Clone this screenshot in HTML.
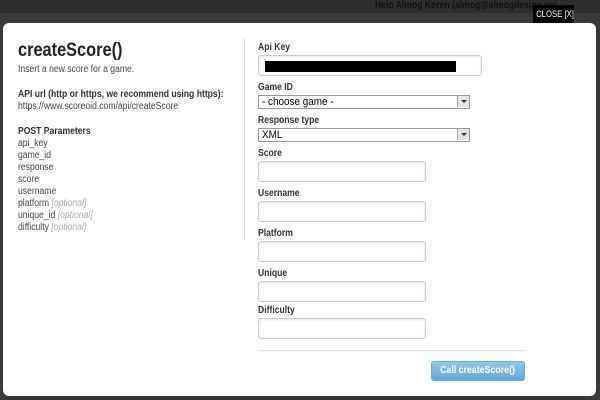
<!DOCTYPE html>
<html><head><style>
*{margin:0;padding:0;box-sizing:border-box}
body{width:600px;height:400px;overflow:hidden;background:#3a3a3a;font-family:"Liberation Sans",Arial,sans-serif;position:relative;color:#333}
.top{position:absolute;left:0;top:0;width:600px;height:13px;background:#2e2e2e}
.a{position:absolute;white-space:nowrap}
.s{transform:scaleX(0.86);transform-origin:0 0}
.m{position:absolute;left:3px;top:23px;width:593px;height:373px;background:#fff;border-radius:6px}
.b{font-weight:bold;font-size:10px;color:#333}
.o{color:#aaa;font-style:italic}
.in{position:absolute;border:1px solid #ccc;border-radius:3px;background:#fff;box-shadow:inset 0 1px 2px rgba(0,0,0,.1)}
.sel{position:absolute;border:1px solid #999;background:#fff;font-size:11px;padding-left:3px;line-height:12px;color:#000}
.sel span{display:inline-block;transform:scaleX(0.9);transform-origin:0 0}
.sel i{position:absolute;right:0;top:0;width:12px;height:11px;background:#e4e4e4;border-left:1px solid #aaa}
.sel i:after{content:"";position:absolute;left:3px;top:4px;border:3px solid transparent;border-top:3px solid #333}
</style></head><body>
<div class="top"></div>
<div class="a s" style="left:375px;top:0;font-size:10px;color:#111;font-weight:bold">Helo Almog Koren (almog@almogdesign.net</div>
<div class="m"></div>
<div class="a" style="left:533px;top:5px;width:41px;height:18px;background:#000;color:#fff;font-size:9px;line-height:18px;text-align:center"><span style="display:inline-block;transform:scaleX(0.86)">CLOSE [X]</span></div>
<div class="a s" style="left:18px;top:40px;font-size:19px;font-weight:bold;color:#222">createScore()</div>
<div class="a s" style="left:18px;top:64px;font-size:10px;color:#444">Insert a new score for a game.</div>
<div class="a b s" style="left:18px;top:89px">API url (http or https, we recommend using https):</div>
<div class="a s" style="left:18px;top:101px;font-size:10px;color:#444">https://www.scoreoid.com/api/createScore</div>
<div class="a s" style="left:18px;top:126px;font-size:10px;line-height:12px;color:#444"><b style="color:#333">POST Parameters</b><br>api_key<br>game_id<br>response<br>score<br>username<br>platform <span class="o">[optional]</span><br>unique_id <span class="o">[optional]</span><br>difficulty <span class="o">[optional]</span></div>
<div class="a" style="left:244px;top:38px;width:1px;height:202px;background:#ddd"></div>
<div class="a b s" style="left:258px;top:42px">Api Key</div>
<div class="in" style="left:258px;top:55px;width:224px;height:21px"><div style="position:absolute;left:6px;top:5px;width:191px;height:11px;background:#000"></div></div>
<div class="a b s" style="left:258px;top:82px">Game ID</div>
<div class="sel" style="left:258px;top:95px;width:212px;height:14px"><span>- choose game -</span><i></i></div>
<div class="a b s" style="left:258px;top:115px">Response type</div>
<div class="sel" style="left:258px;top:128px;width:212px;height:14px"><span>XML</span><i></i></div>
<div class="a b s" style="left:258px;top:148px">Score</div>
<div class="in" style="left:258px;top:161px;width:168px;height:21px"></div>
<div class="a b s" style="left:258px;top:188px">Username</div>
<div class="in" style="left:258px;top:201px;width:168px;height:21px"></div>
<div class="a b s" style="left:258px;top:228px">Platform</div>
<div class="in" style="left:258px;top:241px;width:168px;height:21px"></div>
<div class="a b s" style="left:258px;top:268px">Unique</div>
<div class="in" style="left:258px;top:281px;width:168px;height:21px"></div>
<div class="a b s" style="left:258px;top:305px">Difficulty</div>
<div class="in" style="left:258px;top:318px;width:168px;height:21px"></div>
<div class="a" style="left:258px;top:350px;width:268px;height:1px;background:#e5e5e5"></div>
<div class="a" style="left:431px;top:361px;width:94px;height:20px;border-radius:3px;background:linear-gradient(#8fc8ea,#5fa9d8);border:1px solid #6aaed8;color:#fff;font-size:10px;font-weight:bold;text-align:center;line-height:18px"><span style="display:inline-block;transform:scaleX(0.88)">Call createScore()</span></div>
</body></html>
